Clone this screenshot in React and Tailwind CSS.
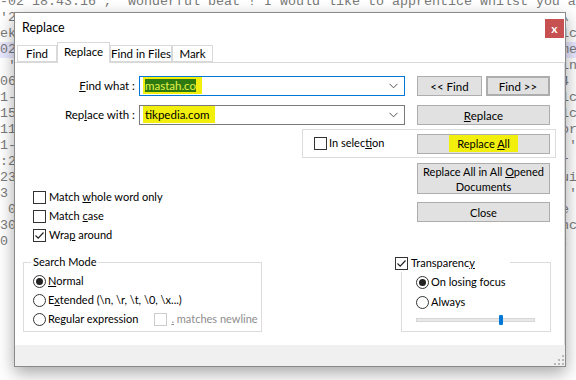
import { useState } from 'react';

const editorLines = [
  ["-02 18:43:16', 'wonderful beat ! I would like to apprentice whilst you a", ''],
  ["'2", '\\'],
  ['ek', '1c'],
  ['02', 'me'],
  [" '", 'in'],
  ['06', '4 '],
  ['1-', '1c'],
  ['15', '1c'],
  ['11', 'or'],
  ['1-', " '"],
  [':2', 'r '],
  ['23', 'ui'],
  ['3', " '"],
  [' 0', 'e '],
  ['30', 'nc'],
  ['0', '; '],
];

function Check({ checked, disabled }) {
  return (
    <span className={`flex h-[13px] w-[13px] shrink-0 items-center justify-center border bg-white ${disabled ? 'border-[#cccccc]' : 'border-[#333333]'}`}>
      {checked && (
        <svg width="11" height="11" viewBox="0 0 11 11">
          <path d="M1.5 5.5 L4.2 8.2 L9.5 2.5" fill="none" stroke="#222" strokeWidth="1.2" />
        </svg>
      )}
    </span>
  );
}

function Radio({ on }) {
  return (
    <span className="flex h-[13px] w-[13px] shrink-0 items-center justify-center rounded-full border border-[#333333] bg-white">
      {on && <span className="h-[7px] w-[7px] rounded-full bg-[#222222]" />}
    </span>
  );
}

function Btn({ children, className = '' }) {
  return (
    <div className={`flex items-center justify-center border border-[#adadad] bg-[#e1e1e1] text-center leading-[15px] ${className}`}>
      {children}
    </div>
  );
}

function Combo({ children, focused }) {
  return (
    <div className={`flex h-[20px] w-[266px] items-center border bg-white pl-[3px] pr-[6px] ${focused ? 'border-[#0078d7]' : 'border-[#7a7a7a]'}`}>
      <div className="flex-1">{children}</div>
      <svg width="9" height="6" viewBox="0 0 9 6">
        <path d="M0.5 0.8 L4.5 4.8 L8.5 0.8" fill="none" stroke="#555" strokeWidth="1" />
      </svg>
    </div>
  );
}

export default function App() {
  const [tab] = useState('Replace');
  const tabs = [
    { name: 'Find', w: 'w-[40px]' },
    { name: 'Replace', w: 'w-[53px]' },
    { name: 'Find in Files', w: 'w-[62px]' },
    { name: 'Mark', w: 'w-[41px]' },
  ];

  return (
    <div className="relative h-[380px] w-[576px] overflow-hidden bg-white">
      {/* editor behind the dialog */}
      <div className="-mt-[6px] font-['Liberation_Mono',monospace] text-[13.33px] leading-[16px] text-[#7a7a7a]">
        {editorLines.map(([l, r], i) => (
          <div key={i} className={`flex h-[16px] whitespace-pre ${i === 3 ? 'bg-[#e8e8ff]' : ''}`}>
            <span>{l}</span>
            {r && <span className="ml-auto w-[15px] overflow-hidden">{r}</span>}
          </div>
        ))}
      </div>

      {/* Replace dialog */}
      <div className="absolute left-[14px] top-[12px] flex h-[355px] w-[552px] flex-col whitespace-nowrap border border-[#8a8a8a] bg-white font-['Lato',sans-serif] text-[11px] text-black shadow-[0_6px_16px_rgba(0,0,0,0.35)]">
        <div className="flex h-[29px] items-start">
          <span className="ml-[7px] mt-[6px] text-[12.5px]">Replace</span>
          <div className="ml-auto mr-[1px] mt-[6px] flex h-[19px] w-[19px] items-center justify-center bg-[#c75050] text-[12px] font-bold leading-none text-white">
            x
          </div>
        </div>

        <div className="flex h-[20px] items-end pl-[2px] text-[11.5px]">
          {tabs.map(t => (
            <div
              key={t.name}
              className={`${t.w} flex items-center justify-center border-l border-r border-t border-[#d9d9d9] bg-white ${
                t.name === tab ? 'relative z-10 -mb-px h-[21px] pb-[2px]' : 'h-[17px] border-b'
              }`}
            >
              {t.name}
            </div>
          ))}
        </div>

        <div className="flex h-[283px] flex-col border-t border-r border-[#d9d9d9]">
          {/* find / replace inputs */}
          <div className="mt-[13px] flex">
            <div className="flex w-[120px] flex-col items-end gap-[9px] text-[11.5px]">
              <div className="flex h-[20px] items-center"><span><span className="underline">F</span>ind what :</span></div>
              <div className="flex h-[20px] items-center"><span>Rep<span className="underline">l</span>ace with :</span></div>
            </div>
            <div className="ml-[4px] flex flex-col gap-[9px] text-[11.5px]">
              <Combo focused>
                <span className="bg-[#f2ef0c] py-[2px] pl-[2px] pr-[6px]">
                  <span className="bg-[#2e7a10] text-[#e4f24a]">mastah.co</span>
                </span>
              </Combo>
              <Combo>
                <span className="bg-[#f2ef0c] py-[2px] pl-[2px] pr-[6px]">tikpedia.com</span>
              </Combo>
            </div>
            <div className="ml-[12px] flex flex-col gap-[9px] text-[11.5px]">
              <div className="flex gap-[4px]">
                <Btn className="h-[20px] w-[65px]">&lt;&lt; Find</Btn>
                <Btn className="h-[20px] w-[64px] border-2 border-[#0078d7]">Find &gt;&gt;</Btn>
              </div>
              <Btn className="h-[20px] w-[133px]"><span><span className="underline">R</span>eplace</span></Btn>
            </div>
          </div>

          {/* in selection group */}
          <div className="ml-[287px] mt-[4px] flex h-[29px] w-[254px] items-center border border-[#dcdcdc] pl-[11px] pr-[5px]">
            <Check />
            <span className="ml-[2px]">In selec<span className="underline">t</span>ion</span>
            <Btn className="ml-auto h-[20px] w-[133px]">
              <span className="bg-[#f2ef0c] px-[8px] py-[1px]">Replace <span className="underline">A</span>ll</span>
            </Btn>
          </div>

          {/* options + more buttons */}
          <div className="mt-[5px] flex">
            <div className="w-[402px] pl-[18px] pt-[25px]">
              {[
                [<>Match <span className="underline">w</span>hole word only</>, false],
                [<>Match <span className="underline">c</span>ase</>, false],
                [<>Wra<span className="underline">p</span> around</>, true],
              ].map(([label, on], i) => (
                <div key={i} className="flex h-[19px] items-center gap-[3px]">
                  <Check checked={on} />
                  <span>{label}</span>
                </div>
              ))}
            </div>
            <div className="flex flex-col gap-[8px]">
              <Btn className="h-[31px] w-[133px]">
                <span>Replace All in All <span className="underline">O</span>pened<br />Documents</span>
              </Btn>
              <Btn className="h-[20px] w-[133px]">Close</Btn>
            </div>
          </div>

          {/* search mode + transparency */}
          <div className="mt-[9px] flex items-start">
            <fieldset className="ml-[8px] h-[78px] w-[239px] min-w-0 border border-[#dcdcdc] pl-[9px]">
              <legend className="-ml-[2px] px-[2px] leading-[16px]">Search Mode</legend>
              <div className="pt-[2px]">
                <div className="flex h-[19px] items-center gap-[2px]">
                  <Radio on />
                  <span><span className="underline">N</span>ormal</span>
                </div>
                <div className="flex h-[19px] items-center gap-[2px]">
                  <Radio />
                  <span>E<span className="underline">x</span>tended (\n, \r, \t, \0, \x...)</span>
                </div>
                <div className="flex h-[19px] items-center gap-[2px]">
                  <Radio />
                  <span>Re<span className="underline">g</span>ular expression</span>
                  <span className="ml-[14px] flex items-center gap-[4px] text-[#8d8d8d]">
                    <Check disabled />
                    <span><span className="underline">.</span> matches newline</span>
                  </span>
                </div>
              </div>
            </fieldset>

            <div className="relative ml-[139px] mt-[8px] h-[70px] w-[150px] border border-[#dcdcdc] pl-[14px] pt-[9px]">
              <div className="absolute -left-[7px] -top-[8px] flex h-[17px] w-[115px] items-center gap-[3px] bg-white">
                <Check checked />
                <span>Transparenc<span className="underline">y</span></span>
              </div>
              <div className="flex h-[20px] items-center gap-[2px]">
                <Radio on />
                <span>On losing focus</span>
              </div>
              <div className="flex h-[20px] items-center gap-[2px]">
                <Radio />
                <span>Always</span>
              </div>
              <div className="relative mt-[2px] flex h-[12px] w-[119px] items-center">
                <div className="h-[4px] w-full border border-[#d6d6d6] bg-[#e7eaea]" />
                <div className="absolute left-[83px] top-[1px] h-[10px] w-[4px] rounded-[1px] bg-[#0078d7]" />
              </div>
            </div>
          </div>
        </div>

        <div className="relative flex-1 bg-[#f0f0f0]">
          <svg className="absolute bottom-[1px] right-[1px]" width="10" height="10" viewBox="0 0 10 10">
            <g fill="#b8b8b8">
              <rect x="8" y="0" width="2" height="2" />
              <rect x="4" y="4" width="2" height="2" />
              <rect x="8" y="4" width="2" height="2" />
              <rect x="0" y="8" width="2" height="2" />
              <rect x="4" y="8" width="2" height="2" />
              <rect x="8" y="8" width="2" height="2" />
            </g>
          </svg>
        </div>
      </div>
    </div>
  );
}
